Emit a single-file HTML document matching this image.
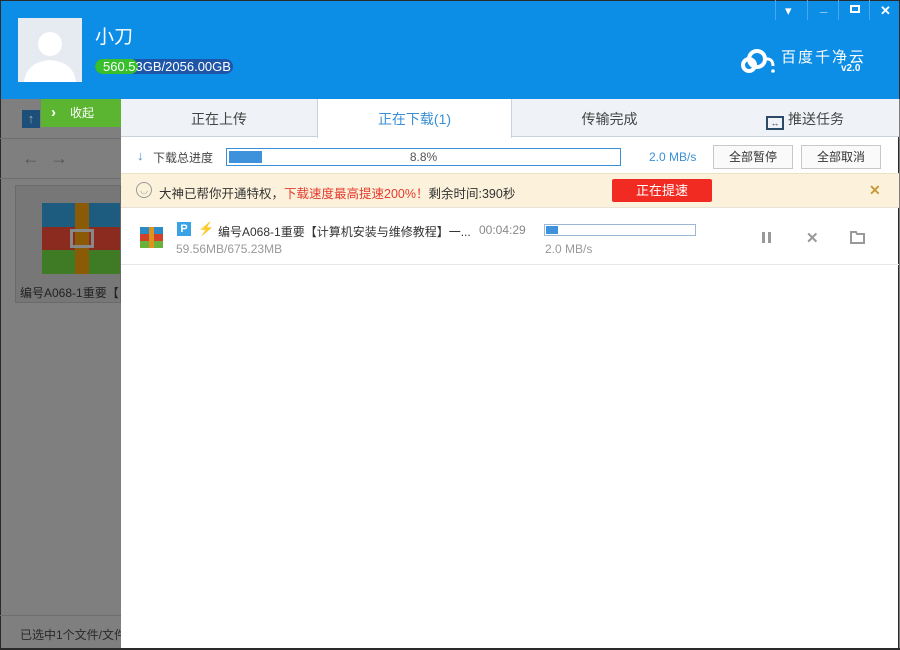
<!DOCTYPE html>
<html><head><meta charset="utf-8"><style>
*{margin:0;padding:0;box-sizing:border-box}
body{width:900px;height:650px;overflow:hidden;position:relative;font-family:"Liberation Sans","Noto Sans CJK SC",sans-serif;font-size:13px;background:#7f7f7f}
.a{position:absolute}
</style></head><body>
<div class="a" style="left:0;top:0;width:900px;height:99px;background:#0c8de6;border:1px solid #2a2a2a;border-bottom:none"></div>
<div class="a" style="left:18px;top:18px;width:64px;height:64px;background:#e6ebf1;overflow:hidden">
<svg width="64" height="64"><circle cx="32" cy="26" r="12" fill="#fff"/><path d="M6 64 Q8 44 32 42 Q56 44 58 64Z" fill="#fff"/></svg></div>
<div class="a" style="left:95px;top:28px;color:#fff;font-size:19px;line-height:1">小刀</div>
<div class="a" style="left:95px;top:59px;width:138px;height:15px;border-radius:8px;background:#1d56a8;overflow:hidden"><div style="width:43px;height:15px;background:#37c02c;border-radius:8px"></div></div>
<div class="a" style="left:103px;top:59px;color:#fff;font-size:13px;line-height:15px">560.53GB/2056.00GB</div>
<div class="a" style="left:775px;top:0;width:125px;height:22px;color:#fff;font-size:13px;line-height:1">
<span class="a" style="left:10px;top:4px">▾</span><span class="a" style="left:45px;top:0;font-weight:bold">_</span><span class="a" style="left:75px;top:5px;width:10px;height:8px;border:2px solid #fff"></span><span class="a" style="left:105px;top:4px;font-weight:bold">✕</span>
<div class="a" style="left:0;top:0;width:1px;height:20px;background:#4aa7ee"></div><div class="a" style="left:32px;top:0;width:1px;height:20px;background:#4aa7ee"></div><div class="a" style="left:63px;top:0;width:1px;height:20px;background:#4aa7ee"></div><div class="a" style="left:94px;top:0;width:1px;height:20px;background:#4aa7ee"></div></div>
<svg class="a" style="left:740px;top:46px" width="36" height="30"><circle cx="17" cy="13" r="8" fill="none" stroke="#fff" stroke-width="4"/><circle cx="9" cy="19" r="6" fill="none" stroke="#fff" stroke-width="4"/><path d="M25 13 Q33 12 33 20" fill="none" stroke="#fff" stroke-width="3"/><circle cx="33" cy="25" r="1.8" fill="#fff"/></svg>
<div class="a" style="left:781px;top:50px;color:#fff;font-size:15px;letter-spacing:2px;line-height:1">百度千净云</div>
<div class="a" style="left:841px;top:64px;color:#fff;font-size:10px;font-weight:bold;line-height:10px">v2.0</div>
<!-- left gray -->
<div class="a" style="left:0;top:99px;width:121px;height:551px;background:#7f7f7f;border-left:1px solid #2a2a2a"></div>
<div class="a" style="left:0;top:138px;width:121px;height:1px;background:#6e6e6e"></div>
<div class="a" style="left:0;top:178px;width:121px;height:1px;background:#6e6e6e"></div>
<div class="a" style="left:22px;top:110px;width:18px;height:18px;background:#1c4f7a;color:#aaa;font-size:13px;text-align:center;line-height:18px">↑</div>
<div class="a" style="left:41px;top:99px;width:80px;height:28px;background:#5bb531;color:#fff;font-size:12px;line-height:28px"><span style="margin-left:10px;font-weight:bold;font-size:15px">›</span><span style="margin-left:14px">收起</span></div>
<div class="a" style="left:22px;top:148px;color:#555;font-size:18px">←&nbsp; →</div>
<div class="a" style="left:15px;top:185px;width:106px;height:118px;background:#777;border:1px solid #6a6a6a"></div>
<div class="a" style="left:42px;top:203px;width:78px;height:71px">
<div style="height:24px;background:#1e5c7f"></div><div style="height:23px;background:#8b2a1e"></div><div style="height:24px;background:#3f7a24"></div>
<div class="a" style="left:33px;top:0;width:14px;height:71px;background:#8a5a06"></div>
<div class="a" style="left:28px;top:26px;width:24px;height:19px;border:3px solid #888"></div></div>
<div class="a" style="left:20px;top:284px;color:#222;font-size:12px;white-space:nowrap;width:100px;overflow:hidden">编号A068-1重要【</div>
<div class="a" style="left:0;top:615px;width:121px;height:1px;background:#6e6e6e"></div>
<div class="a" style="left:20px;top:626px;color:#2a2a2a;font-size:12px;white-space:nowrap;width:101px;overflow:hidden">已选中1个文件/文件</div>
<div class="a" style="left:0;top:648px;width:900px;height:2px;background:#2a2a2a"></div>
<!-- panel -->
<div class="a" style="left:121px;top:99px;width:778px;height:549px;background:#fff;border-right:1px solid #2a2a2a"></div>
<div class="a" style="left:121px;top:99px;width:778px;height:38px;background:#eff3f8;border-bottom:1px solid #c9d3de"></div>
<div class="a" style="left:317px;top:99px;width:195px;height:39px;background:#fff;border-left:1px solid #c9d3de;border-right:1px solid #c9d3de"></div>
<div class="a" style="left:121px;top:109px;width:196px;text-align:center;font-size:14px;color:#444">正在上传</div>
<div class="a" style="left:317px;top:109px;width:195px;text-align:center;font-size:14px;color:#3b8fd8">正在下载(1)</div>
<div class="a" style="left:512px;top:109px;width:195px;text-align:center;font-size:14px;color:#444">传输完成</div>
<div class="a" style="left:766px;top:109px;font-size:14px;color:#444"><span style="display:inline-block;width:18px;height:14px;border:2px solid #2c4a66;vertical-align:-2px;margin-right:4px;font-size:9px;line-height:10px;text-align:center;font-weight:bold">↔</span>推送任务</div>
<div class="a" style="left:137px;top:148px;color:#3b8fd8;font-size:13px">↓</div>
<div class="a" style="left:153px;top:149px;font-size:12px;color:#444">下载总进度</div>
<div class="a" style="left:226px;top:148px;width:395px;height:18px;border:1px solid #3b8fd8"><div style="margin:2px;width:33px;height:12px;background:#3e92dc"></div></div>
<div class="a" style="left:226px;top:150px;width:395px;text-align:center;font-size:12px;color:#555">8.8%</div>
<div class="a" style="left:649px;top:150px;font-size:12px;color:#3b8fd8">2.0 MB/s</div>
<div class="a" style="left:713px;top:145px;width:80px;height:24px;border:1px solid #c8c8c8;text-align:center;line-height:22px;font-size:12px;color:#333;background:#fafafa">全部暂停</div>
<div class="a" style="left:801px;top:145px;width:80px;height:24px;border:1px solid #c8c8c8;text-align:center;line-height:22px;font-size:12px;color:#333;background:#fafafa">全部取消</div>
<div class="a" style="left:121px;top:173px;width:778px;height:35px;background:#fcf2dc;border-top:1px solid #eee0c0;border-bottom:1px solid #e8e2d6"></div>
<div class="a" style="left:136px;top:182px;width:16px;height:16px;border:1px solid #999;border-radius:50%;font-size:9px;text-align:center;line-height:14px;color:#999">◡</div>
<div class="a" style="left:159px;top:183px;font-size:12.5px;color:#333;white-space:nowrap">大神已帮你开通特权，<span style="color:#e53a2d">下载速度最高提速200%！</span>剩余时间:390秒</div>
<div class="a" style="left:612px;top:179px;width:100px;height:23px;background:#f22b22;border-radius:2px;color:#fff;text-align:center;line-height:23px;font-size:13px">正在提速</div>
<div class="a" style="left:869px;top:182px;color:#c89a3a;font-size:14px;font-weight:bold">✕</div>
<div class="a" style="left:140px;top:227px;width:23px;height:21px">
<div style="height:7px;background:#2b8bc9"></div><div style="height:7px;background:#d2412a"></div><div style="height:7px;background:#6ab33a"></div>
<div class="a" style="left:9px;top:0;width:5px;height:21px;background:#e0931c"></div></div>
<div class="a" style="left:177px;top:222px;width:14px;height:14px;background:#3aa3e6;color:#fff;font-size:11px;font-weight:bold;text-align:center;line-height:14px">P</div>
<div class="a" style="left:198px;top:221px;color:#f5a11c;font-size:13px">⚡</div>
<div class="a" style="left:218px;top:223px;font-size:12px;color:#333;white-space:nowrap">编号A068-1重要【计算机安装与维修教程】一...</div>
<div class="a" style="left:479px;top:223px;font-size:12px;color:#888">00:04:29</div>
<div class="a" style="left:176px;top:242px;font-size:12px;color:#999">59.56MB/675.23MB</div>
<div class="a" style="left:544px;top:224px;width:152px;height:12px;border:1px solid #9ab8d6"><div style="margin:1px;width:12px;height:8px;background:#3e92dc"></div></div>
<div class="a" style="left:545px;top:242px;font-size:12px;color:#999">2.0 MB/s</div>
<div class="a" style="left:762px;top:232px;width:3px;height:11px;background:#999"></div><div class="a" style="left:768px;top:232px;width:3px;height:11px;background:#999"></div>
<div class="a" style="left:806px;top:229px;color:#999;font-size:15px;font-weight:bold">✕</div>
<svg class="a" style="left:850px;top:231px" width="15" height="13"><path d="M1 1h5l1 2h7v9H1z" fill="none" stroke="#999" stroke-width="2"/></svg>
<div class="a" style="left:121px;top:264px;width:778px;height:1px;background:#e6e6e6"></div>
</body></html>
